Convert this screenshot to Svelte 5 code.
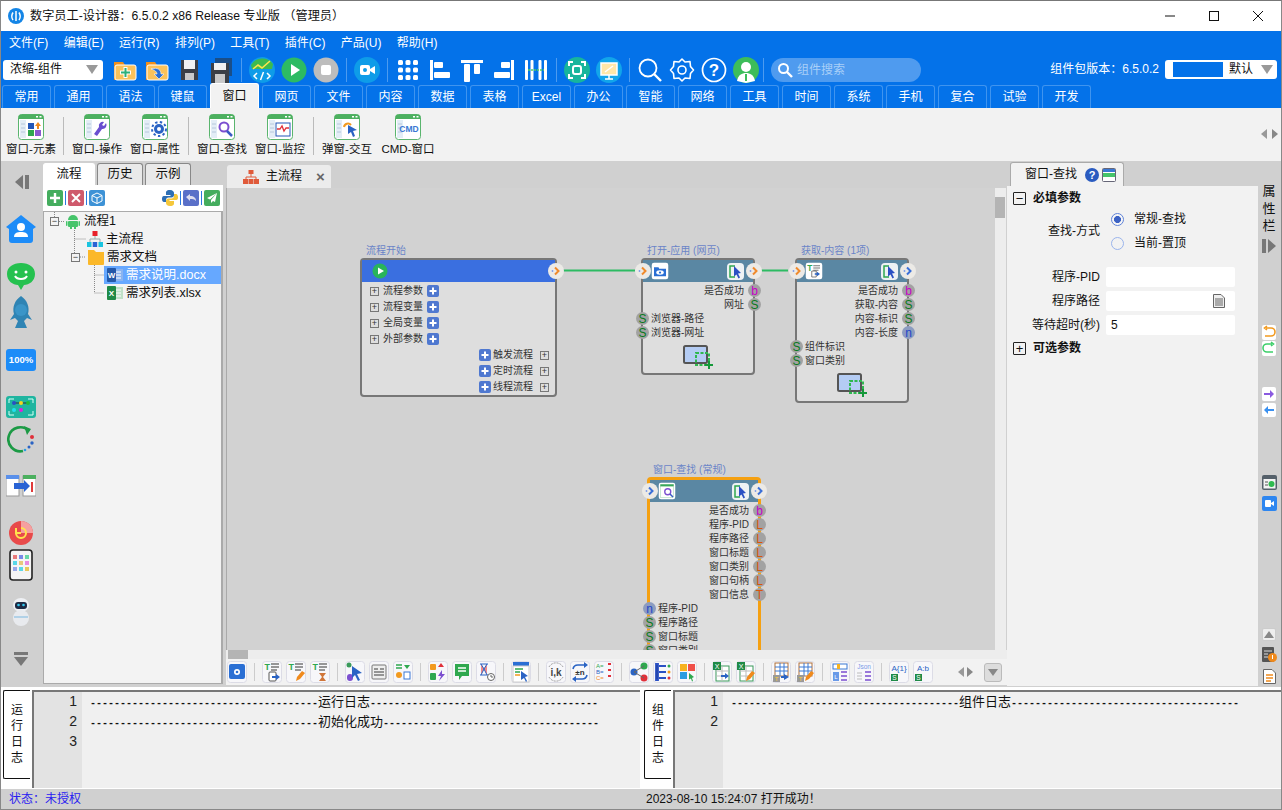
<script>
  const menus = ['文件(F)', '编辑(E)', '运行(R)', '排列(P)', '工具(T)', '插件(C)', '产品(U)', '帮助(H)']
  const tabs = ['常用', '通用', '语法', '键鼠', '窗口', '网页', '文件', '内容', '数据', '表格', 'Excel', '办公', '智能', '网络', '工具', '时间', '系统', '手机', '复合', '试验', '开发']

  const winBody = {
    elem: '<rect x="10" y="9" width="6" height="6" fill="#2357b8"/><path d="M20 8l3 4h-2v3h-2v-3h-2z" fill="#f08a1c"/><rect x="10" y="16" width="6" height="6" fill="#2fa84f"/><rect x="17" y="16" width="6" height="6" fill="#8a5ad0"/>',
    wrench: '<path d="M22 9a4 4 0 0 1-4 6l-5 7-3-2 5-7a4 4 0 0 1 5-5l-2 3 2 1z" fill="#6a4fd0"/>',
    gear: '<circle cx="17" cy="15" r="5" fill="#2a63c4"/><circle cx="17" cy="15" r="7" fill="none" stroke="#2a63c4" stroke-width="2" stroke-dasharray="2.4 2.4"/><circle cx="17" cy="15" r="2" fill="#fff"/>',
    search: '<circle cx="15" cy="13" r="4.5" fill="#fff" stroke="#7c4fd0" stroke-width="2"/><path d="M18 17l5 5" stroke="#3a5bc4" stroke-width="2.5"/>',
    monitor: '<rect x="9" y="9" width="14" height="13" fill="#fff" stroke="#2357b8"/><path d="M10 15h3l2-3 2 5 2-3h3" fill="none" stroke="#e0303a" stroke-width="1.3"/>',
    pop: '<path d="M10 13a4 4 0 0 1 7-2" fill="none" stroke="#f29a1f" stroke-width="2"/><path d="M14 11l9 5-4 1 2 5-2 1-2-5-3 2z" fill="#2a63c4"/>',
    cmd: '<text x="14" y="18" font-size="8.500" font-weight="700" text-anchor="middle" fill="#3a78d4" font-family="Liberation Sans">CMD</text>'
  }
  const ribbon = [
    { key: 'elem', label: '窗口-元素' }, 'sep',
    { key: 'wrench', label: '窗口-操作' }, { key: 'gear', label: '窗口-属性' }, 'sep',
    { key: 'search', label: '窗口-查找' }, { key: 'monitor', label: '窗口-监控' }, 'sep',
    { key: 'pop', label: '弹窗-交互' }, { key: 'cmd', label: 'CMD-窗口' }
  ]

  const box = '<rect x=".5" y=".5" width="19" height="21" rx="3" fill="#f7f7fa" stroke="#dcdce6"/>'
  const tList = '<text x="2.500" y="9" font-size="9" font-weight="700" fill="#2fa84f" font-family="Liberation Sans">T</text><path d="M9 3h8M9 6h8M9 9h6" stroke="#777" stroke-width="1.300"/>'
  const pen = '<path d="M10 20l1-4 5-6 3 2-5 6z" fill="#f08a1c"/>'
  const arrowDoc = '<rect x="7" y="11" width="7" height="9" rx="1" fill="#fff" stroke="#555"/><path d="M10 15h4v-2l4 3-4 3v-2h-4z" fill="#2a63c4"/>'
  const xl = '<rect x="1" y="1" width="8" height="8" fill="#1f8a46"/><text x="5" y="7.500" font-size="7" fill="#fff" text-anchor="middle" font-family="Liberation Sans">X</text>'
  const grid = '<rect x="4" y="2" width="13" height="13" fill="#fff" stroke="#b0703a"/><path d="M4 6h13M4 10h13M9 2v13M13 2v13" stroke="#3a78d4"/><rect x="2" y="14" width="7" height="7" fill="#999"/><text x="5.500" y="20" font-size="6" fill="#fc3" text-anchor="middle" font-family="Liberation Sans">T</text>'
  const excelDoc = '<rect x="4" y="5" width="13" height="15" fill="#fff" stroke="#3a9a5a"/><path d="M4 10h13M4 15h13M10 5v15" stroke="#bbb"/>' + xl
  const bottomIcons = [
    ['<rect x="2" y="3" width="16" height="15" rx="2" fill="#2a6fd4"/><circle cx="10" cy="11" r="3" fill="#fff"/><circle cx="10" cy="11" r="1.300" fill="#2a6fd4"/>'],
    [tList + arrowDoc, tList + pen, tList + '<path d="M9 12h7l-3 4 3 4h-7l3-4z" fill="#d0763a"/>'],
    ['<circle cx="4" cy="4" r="2.500" fill="#3a9a5a"/><rect x="2" y="13" width="6" height="7" rx="3" fill="#7c4fd0"/><path d="M7 5l10 7-5 1 3 6-2 1-3-6-3 3z" fill="#2a63c4"/>',
      '<rect x="3" y="4" width="14" height="14" rx="1" fill="#eee" stroke="#777"/><path d="M5 8h4M11 8h4M5 11h10M5 14h10" stroke="#777" stroke-width="1.500"/>',
      '<path d="M3 4h6M3 7h6" stroke="#2fa84f" stroke-width="1.500"/><path d="M11 4h6l-3 4z" fill="#2fa84f"/><circle cx="6" cy="14" r="3" fill="#f29a1f"/><rect x="11" y="11" width="6" height="7" fill="#fff" stroke="#3a78d4"/>'],
    ['<rect x="2" y="3" width="6" height="6" rx="1" fill="#f29a1f"/><path d="M13 2l3 4h-6z" fill="#e0303a"/><rect x="2" y="12" width="6" height="7" rx="1" fill="#2fa84f"/><path d="M14 9l-4 6h3l-2 5 6-7h-3z" fill="#7c4fd0"/>',
      '<path d="M3 3h14v12h-7l-3 4v-4h-4z" fill="#2fa84f"/><path d="M6 7h8M6 10h8" stroke="#fff" stroke-width="1.300"/>',
      '<path d="M4 3h8M4 14h8M5 3l3 5-3 6M11 3l-3 5 3 6" fill="#e88" stroke="#2a63c4"/><circle cx="15" cy="16" r="3.500" fill="#fff" stroke="#666"/><path d="M15 14v2h2" fill="none" stroke="#666"/>'],
    ['<rect x="2" y="1" width="16" height="4" fill="#2a6fd4"/><rect x="2" y="5" width="16" height="16" fill="#fff" stroke="#ccc"/><path d="M4 8h8M4 11h5" stroke="#2fa84f" stroke-width="1.500"/><path d="M4 14h5" stroke="#f29a1f" stroke-width="1.500"/><path d="M10 10l7 5-3 1 2 4-1 1-2-4-3 2z" fill="#2a63c4"/>'],
    ['<path d="M3 6a8 8 0 0 1 14 0M3 16a8 8 0 0 0 14 0" fill="none" stroke="#999" stroke-dasharray="2 1"/><text x="10" y="15" font-size="10" font-weight="700" fill="#444" text-anchor="middle" font-family="Liberation Sans">i,k</text>',
      '<path d="M3 8a5 5 0 0 1 5-4h7M17 14a5 5 0 0 1-5 4H5" fill="none" stroke="#2a63c4" stroke-width="1.600"/><path d="M14 1l4 3-4 3zM6 15l-4 3 4 3z" fill="#2a63c4"/><text x="10" y="14" font-size="8" font-weight="700" fill="#333" text-anchor="middle" font-family="Liberation Sans">±n</text>',
      '<text x="2" y="7" font-size="6" fill="#2fa84f" font-family="Liberation Sans">A=</text><text x="2" y="13" font-size="6" fill="#2a63c4" font-family="Liberation Sans">B=</text><text x="2" y="19" font-size="6" fill="#f08a1c" font-family="Liberation Sans">C=</text><path d="M14 3h3M14 9h3M14 15h3" stroke="#e0303a" stroke-width="2"/>'],
    ['<circle cx="5" cy="11" r="3.500" fill="#2a63c4"/><circle cx="15" cy="5" r="3.500" fill="#2fa84f"/><circle cx="15" cy="17" r="3.500" fill="#e0303a"/><path d="M5 11L15 5M5 11l10 6" stroke="#666"/>',
      '<path d="M3 3h2v16H3zM6 5h7M6 11h7M6 17h7" stroke="#2a50c4" stroke-width="1.800"/><circle cx="16" cy="5" r="1.500" fill="#2fa84f"/><circle cx="16" cy="11" r="1.500" fill="#f29a1f"/><circle cx="16" cy="17" r="1.500" fill="#e0303a"/>',
      '<rect x="3" y="3" width="7" height="7" fill="#f7b21f"/><rect x="11" y="3" width="7" height="7" fill="#f0504a"/><rect x="3" y="11" width="7" height="7" fill="#2a9de0"/><path d="M12 12l5 4-2 1 1 3-1 .5-1-3-2 1z" fill="#2fa84f"/>'],
    [excelDoc + '<path d="M9 14h4v-2l4 3-4 3v-2h-4z" fill="#2a63c4"/>', excelDoc + pen],
    [grid + '<path d="M10 15h3v-2l5 3-5 3v-2h-3z" fill="#2a63c4"/>', grid + pen],
    ['<rect x="3" y="3" width="14" height="5" fill="#fff" stroke="#3a78d4"/><rect x="7" y="3" width="3" height="5" fill="#f7b21f"/><rect x="3" y="11" width="6" height="9" fill="#6a9ae8"/><text x="6" y="18" font-size="6" fill="#fff" text-anchor="middle" font-family="Liberation Sans">L</text><path d="M11 11h6M11 15h6M11 19h6" stroke="#7c4fd0" stroke-width="1.400"/>',
      '<text x="10" y="8" font-size="6.500" fill="#7c9ae8" text-anchor="middle" font-family="Liberation Sans">Json</text><path d="M3 12h5M3 15h5M3 18h5" stroke="#bbb"/><path d="M11 11h6M11 15h6M11 19h6" stroke="#7c4fd0" stroke-width="1.400"/>'],
    ['<text x="10" y="10" font-size="8" fill="#2a63c4" text-anchor="middle" font-family="Liberation Sans">A{1}</text><rect x="2" y="13" width="7" height="7" fill="#1f8a46"/><text x="5.500" y="19" font-size="6.500" fill="#fff" text-anchor="middle" font-family="Liberation Sans">S</text>',
      '<text x="10" y="10" font-size="8" fill="#2a63c4" text-anchor="middle" font-family="Liberation Sans">A:b</text><rect x="2" y="13" width="7" height="7" fill="#1f8a46"/><text x="5.500" y="19" font-size="6.500" fill="#fff" text-anchor="middle" font-family="Liberation Sans">S</text>']
  ]

  const dashes = (n) => '-'.repeat(n)

  const windowGlyph = '<rect x="1" y="1" width="22" height="22" rx="3" fill="#fff"/><rect x="3" y="3" width="18" height="3" fill="#3aa85a"/><rect x="3" y="6" width="18" height="15" fill="#fff" stroke="#8ccf9e" stroke-width=".6"/>'
  const nodes = [
    {
      id: 'open', title: '打开-应用 (网页)', x: 414, y: 55, w: 114, h: 117,
      glyph: '<rect x="1" y="1" width="22" height="22" rx="3" fill="#fff"/><path d="M4 7h6l1 2h9v10H4z" fill="#2a6fd4"/><ellipse cx="12" cy="14" rx="5" ry="3" fill="#fff"/><circle cx="12" cy="14" r="1.500" fill="#2a6fd4"/>',
      inTone: 'orange', outTone: 'orange',
      outs: [['是否成功', 'b'], ['网址', 'S']], ins: [['浏览器-路径', 'S'], ['浏览器-网址', 'S']]
    },
    {
      id: 'get', title: '获取-内容 (1项)', x: 568, y: 55, w: 114, h: 145,
      glyph: '<rect x="1" y="1" width="22" height="22" rx="3" fill="#fff"/><text x="3" y="12" font-size="11" font-weight="700" fill="#2fa84f" font-family="Liberation Sans">T</text><path d="M11 5h9M11 8h9M11 11h7" stroke="#777" stroke-width="1.400"/><path d="M9 12h6v8H9z" fill="#fff" stroke="#555"/><path d="M13 15h3v-2l4 3-4 3v-2h-3z" fill="#2a63c4"/>',
      inTone: 'orange', outTone: 'blue',
      outs: [['是否成功', 'b'], ['获取-内容', 'S'], ['内容-标识', 'S'], ['内容-长度', 'n']], ins: [['组件标识', 'S'], ['窗口类别', 'S']]
    },
    {
      id: 'find', title: '窗口-查找 (常规)', x: 420, y: 274, w: 114, h: 300, active: true,
      glyph: windowGlyph + '<circle cx="13" cy="13" r="4" fill="#fff" stroke="#7c4fd0" stroke-width="1.800"/><path d="M16 16l4 4" stroke="#3a5bc4" stroke-width="2"/>',
      inTone: 'blue', outTone: 'blue',
      outs: [['是否成功', 'b'], ['程序-PID', 'L'], ['程序路径', 'L'], ['窗口标题', 'L'], ['窗口类别', 'L'], ['窗口句柄', 'L'], ['窗口信息', 'T']],
      ins: [['程序-PID', 'n'], ['程序路径', 'S'], ['窗口标题', 'S'], ['窗口类别', 'S']]
    }
  ]
</script>

{#snippet execPort(side, tone)}
  <span class="exec {side}">
    <svg width="12" height="12" viewBox="0 0 12 12">
      <path d="M5 2.500L8.500 6 5 9.500" fill="none" stroke={tone === 'orange' ? '#f08a2c' : '#3a6fd8'} stroke-width="2" />
      <circle cx="2.500" cy="6" r=".9" fill="#7c9ae8" />
    </svg>
  </span>
{/snippet}

{#snippet plusBtn()}
  <svg class="plus" width="12" height="12" viewBox="0 0 12 12">
    <rect width="12" height="12" rx="2" fill="#4f78d0" />
    <path d="M6 2.500v7M2.500 6h7" stroke="#fff" stroke-width="2" />
  </svg>
{/snippet}

{#snippet expander(open)}
  <span class="expander">{open ? '−' : '+'}</span>
{/snippet}

{#snippet addShot()}
  <svg class="shot" width="30" height="24" viewBox="0 0 30 24">
    <rect x="1" y="1" width="23" height="17" rx="1.500" fill="#b4ccf4" stroke="#555" stroke-width="2" />
    <rect x="13" y="8" width="13" height="12" fill="none" stroke="#2fb84f" stroke-width="2" stroke-dasharray="3 1.500" />
    <path d="M26 16v8M22 20h8" stroke="#15993a" stroke-width="2" />
  </svg>
{/snippet}

{#snippet cursorChip()}
  <svg width="17" height="17" viewBox="0 0 17 17">
    <rect width="17" height="17" rx="4" fill="#eef2f4" />
    <path d="M8 3H3v11h5" fill="none" stroke="#2fa84f" stroke-width="1.500" />
    <path d="M7 3l7 7-3 .5 2 4-1.500 1-2-4-2.500 2z" fill="#2a50c4" />
  </svg>
{/snippet}

{#snippet port(kind)}
  <span class="port" class:b={kind === 'b'} class:s={kind === 'S'} class:n={kind === 'n'} class:l={kind === 'L' || kind === 'T'}>{kind}</span>
{/snippet}

<div class="window">
  <header class="titlebar">
    <svg width="16" height="16" viewBox="0 0 16 16">
      <circle cx="8" cy="8" r="8" fill="#1485e6" />
      <path d="M8 3v10M5 4.500C3.500 7 3.500 10 5 12M11 4.500c1.500 2.500 1.500 5.500 0 7.500" fill="none" stroke="#fff" stroke-width="1.500" />
    </svg>
    <span class="title">数字员工-设计器：6.5.0.2 x86 Release 专业版 （管理员）</span>
    <div class="controls">
      <svg width="10" height="10" viewBox="0 0 10 10"><path d="M0 5h10" stroke="#111" /></svg>
      <svg width="10" height="10" viewBox="0 0 10 10"><rect x=".5" y=".5" width="9" height="9" fill="none" stroke="#111" /></svg>
      <svg width="10" height="10" viewBox="0 0 10 10"><path d="M0 0l10 10M10 0L0 10" stroke="#111" /></svg>
    </div>
  </header>

  <nav class="menubar">
    {#each menus as m}<span>{m}</span>{/each}
  </nav>

  <div class="toolbar">
    <div class="select">浓缩-组件<i class="caret"></i></div>

    <div class="group first">
      <svg class="ti" viewBox="0 0 26 26"><path d="M2 5h9l2 3h10v15H2z" fill="#f08f1a" /><rect x="3" y="8" width="21" height="15" rx="2" fill="#fbc25a" stroke="#fff" /><path d="M13.500 10v11M8 15.500h11" stroke="#fff" stroke-width="4" /><path d="M13.500 11v9M9 15.500h9" stroke="#2fb07a" stroke-width="2" /></svg>
      <svg class="ti" viewBox="0 0 26 26"><path d="M2 5h9l2 3h10v15H2z" fill="#f08f1a" /><rect x="3" y="8" width="21" height="15" rx="2" fill="#fbc25a" stroke="#fff" /><path d="M7 12c7-2 10 1 10 5h3l-5 5-5-5h3c0-2-2-4-6-5z" fill="#2a6fd4" stroke="#fff" stroke-width=".6" /></svg>
      <svg class="ti" viewBox="0 0 26 26"><path d="M5 3h17v20H5z" fill="#3b3f46" /><rect x="8" y="3" width="11" height="9" fill="#f1f1f1" /><rect x="9" y="16" width="9" height="7" fill="#c9c9c9" /></svg>
      <svg class="ti" viewBox="0 0 26 26"><rect x="7" y="1" width="17" height="18" fill="#1a4e88" /><path d="M3 6h18v20H3z" fill="#3b3f46" /><rect x="6" y="6" width="12" height="7" fill="#f1f1f1" /><rect x="7" y="17" width="10" height="9" fill="#c9c9c9" /></svg>
    </div>
    <i class="sep"></i>
    <div class="group">
      <svg class="ti" viewBox="0 0 26 26"><circle cx="13" cy="13" r="13" fill="#0e9ce8" /><path d="M2 8a13 13 0 0 1 22-1l-1 5H3z" fill="#3dba4e" /><path d="M4 12l5-4 4 3 8-7" fill="none" stroke="#ffe34d" stroke-width="1.600" /><path d="M8 16l-3 3 3 3M18 16l3 3-3 3M14.500 15l-3 8" fill="none" stroke="#fff" stroke-width="1.500" /></svg>
      <svg class="ti" viewBox="0 0 26 26"><circle cx="13" cy="13" r="12.500" fill="#2dbb63" /><path d="M10 7l9 6-9 6z" fill="#fff" /></svg>
      <svg class="ti" viewBox="0 0 26 26"><circle cx="13" cy="13" r="12.500" fill="#bdbdbd" /><rect x="8" y="8" width="10" height="10" rx="2" fill="#fff" /></svg>
    </div>
    <i class="sep"></i>
    <div class="group">
      <svg class="ti" viewBox="0 0 26 26"><circle cx="13" cy="13" r="13" fill="#0e9ce8" /><rect x="6" y="8" width="10" height="10" rx="2" fill="#fff" /><path d="M16 12l5-3v8l-5-3z" fill="#fff" /><circle cx="11" cy="13" r="2" fill="#0e9ce8" /></svg>
    </div>
    <i class="sep"></i>
    <div class="group">
      <svg class="ti" viewBox="0 0 26 26" fill="#fff"><rect x="3" y="3" width="5" height="5" rx="1.500" /><rect x="10.500" y="3" width="5" height="5" rx="1.500" /><rect x="18" y="3" width="5" height="5" rx="1.500" /><rect x="3" y="10.500" width="5" height="5" rx="1.500" /><rect x="10.500" y="10.500" width="5" height="5" rx="1.500" /><rect x="18" y="10.500" width="5" height="5" rx="1.500" /><rect x="3" y="18" width="5" height="5" rx="1.500" /><rect x="10.500" y="18" width="5" height="5" rx="1.500" /><rect x="18" y="18" width="5" height="5" rx="1.500" /></svg>
      <svg class="ti" viewBox="0 0 26 26" fill="#fff"><rect x="3" y="3" width="3" height="20" /><rect x="7" y="5" width="9" height="6" rx="1" /><rect x="7" y="15" width="16" height="6" rx="1" /></svg>
      <svg class="ti" viewBox="0 0 26 26" fill="#fff"><rect x="2" y="3" width="22" height="3" /><rect x="5" y="7" width="6" height="18" rx="1" /><rect x="15" y="7" width="6" height="10" rx="1" /></svg>
      <svg class="ti" viewBox="0 0 26 26" fill="#fff"><rect x="20" y="3" width="3" height="20" /><rect x="10" y="5" width="9" height="6" rx="1" /><rect x="3" y="15" width="16" height="6" rx="1" /></svg>
      <svg class="ti" viewBox="0 0 26 26" fill="#fff"><rect x="2" y="3" width="3" height="20" rx="1" /><rect x="7.500" y="3" width="3" height="20" rx="1" /><rect x="15.500" y="3" width="3" height="20" rx="1" /><rect x="21" y="3" width="3" height="20" rx="1" /><path d="M5 13h16" stroke="#4fd060" stroke-width="1.500" stroke-dasharray="2 1" /></svg>
    </div>
    <i class="sep"></i>
    <div class="group">
      <svg class="ti" viewBox="0 0 26 26"><circle cx="13" cy="13" r="13" fill="#17b59c" /><rect x="9" y="9" width="8" height="8" rx="2" fill="none" stroke="#fff" stroke-width="2" /><path d="M5 9V5h4M21 9V5h-4M5 17v4h4M21 17v4h-4" fill="none" stroke="#fff" stroke-width="2" /></svg>
      <svg class="ti" viewBox="0 0 26 26"><circle cx="13" cy="13" r="13" fill="#12a5ea" /><rect x="5" y="6" width="16" height="12" fill="#ffe7a8" stroke="#fff" stroke-width="1.500" /><path d="M9 22h8M13 18v4M9 15l8-6" stroke="#fff" stroke-width="1.500" /></svg>
    </div>
    <i class="sep"></i>
    <div class="group">
      <svg class="ti" viewBox="0 0 26 26"><circle cx="11" cy="11" r="8.500" fill="none" stroke="#fff" stroke-width="1.800" /><path d="M17 17l7 7" stroke="#fff" stroke-width="2.400" /></svg>
      <svg class="ti" viewBox="0 0 26 26"><path d="M13 2l3 3 5-.5.500 5 3 3.500-3 3.500-.5 5-5-.5-3 3-3-3-5 .5-.5-5-3-3.500 3-3.500.5-5 5 .5z" fill="none" stroke="#fff" stroke-width="1.600" stroke-linejoin="round" /><circle cx="13" cy="13" r="4" fill="none" stroke="#fff" stroke-width="1.600" /></svg>
      <svg class="ti" viewBox="0 0 26 26"><circle cx="13" cy="13" r="11.500" fill="none" stroke="#fff" stroke-width="1.700" /><text x="13" y="19" font-size="17" font-weight="700" fill="#fff" text-anchor="middle" font-family="Liberation Sans">?</text></svg>
      <svg class="ti" viewBox="0 0 26 26"><circle cx="13" cy="13" r="13" fill="#3dbd5a" /><circle cx="13" cy="10" r="5" fill="#fff" /><path d="M4 24c1-6 5-8 9-8s8 2 9 8l-9 2z" fill="#fff" /><path d="M13 17v7" stroke="#3dbd5a" stroke-width="2" /></svg>
    </div>
    <i class="sep last"></i>
    <div class="searchbox">
      <svg width="16" height="16" viewBox="0 0 16 16"><circle cx="6.500" cy="6.500" r="4.500" fill="none" stroke="#fff" stroke-width="2" /><path d="M10 10l5 5" stroke="#fff" stroke-width="2.400" /></svg>
      <span>组件搜索</span>
    </div>
    <span class="pkg">组件包版本：6.5.0.2</span>
    <div class="theme"><i class="swatch"></i><span>默认</span><i class="caret"></i></div>
  </div>

  <div class="tabbar">
    {#each tabs as t}<span class="tab" class:active={t === '窗口'}>{t}</span>{/each}
  </div>

  <div class="ribbon">
    {#each ribbon as r}
      {#if r === 'sep'}
        <i class="rsep"></i>
      {:else}
        <div class="ritem" class:cmd={r.key === 'cmd'}>
          <svg width="26" height="26" viewBox="0 0 26 26">
            <rect x=".5" y=".5" width="25" height="25" rx="3" fill="#fff" stroke="#5ab56e" />
            <path d="M.5 5V3.500a3 3 0 0 1 3-3h19a3 3 0 0 1 3 3V5z" fill="#4cb05f" />
            <rect x="18" y="2" width="2" height="1.500" fill="#fff" /><rect x="21.500" y="2" width="2" height="1.500" fill="#fff" />
            <rect x="2" y="6" width="6" height="18" fill="#e3edf6" />
            <path d="M3 10h4M3 14h4M3 18h4" stroke="#b6c8dc" />
            {@html winBody[r.key]}
          </svg>
          <span>{r.label}</span>
        </div>
      {/if}
    {/each}
    <div class="rscroll"><i class="tri left"></i><i class="tri right"></i></div>
  </div>

  <main class="workspace">
    <aside class="dock">
      <svg class="dock-toggle" width="16" height="14" viewBox="0 0 16 14"><path d="M9 0v14L1 7z" fill="#777" /><rect x="11" width="4" height="14" fill="#777" /></svg>
      <svg class="d-home" width="30" height="28" viewBox="0 0 30 28"><path d="M15 0L0 12l3 2v11a3 3 0 0 0 3 3h18a3 3 0 0 0 3-3V14l3-2z" fill="#1d8cf8" /><circle cx="15" cy="12" r="4" fill="#fff" /><path d="M8 22c0-4 3-5 7-5s7 1 7 5z" fill="#fff" /></svg>
      <svg class="d-smile" width="28" height="28" viewBox="0 0 28 28"><path d="M14 0c8 0 14 4 14 11s-6 11-11 11l-3 5-3-5C6 22 0 18 0 11S6 0 14 0z" fill="#25c14f" /><circle cx="9" cy="9" r="1.500" fill="#fff" /><circle cx="19" cy="9" r="1.500" fill="#fff" /><path d="M8 13c2 4 10 4 12 0" fill="none" stroke="#fff" stroke-width="2" /></svg>
      <svg class="d-fish" width="22" height="32" viewBox="0 0 22 32"><path d="M11 0c6 4 9 11 7 18l4 6-5-2-3 3 3 7H5l3-7-3-3-5 2 4-6C2 11 5 4 11 0z" fill="#2f84b4" /><circle cx="11" cy="14" r="6" fill="#3a95c8" /></svg>
      <div class="d-pct">100%</div>
      <svg class="d-teal" width="30" height="22" viewBox="0 0 30 22"><rect width="30" height="22" rx="3" fill="#1fb5a0" /><path d="M3 7V3h5M27 7V3h-5M3 15v4h5M27 15v4h-5" fill="none" stroke="#d8fff6" /><path d="M7 7h14" stroke="#333" /><circle cx="8" cy="7" r="2" fill="#2a50c4" /><circle cx="15" cy="7" r="2" fill="#f5d71f" /><circle cx="22" cy="7" r="2" fill="#1fbd3a" /><circle cx="8" cy="14" r="2" fill="#1fe0f0" /><circle cx="15" cy="14" r="2" fill="#e01fe0" /></svg>
      <svg class="d-cycle" width="28" height="28" viewBox="0 0 28 28"><path d="M22 6A12 12 0 1 0 16 26" fill="none" stroke="#1c9a45" stroke-width="2.600" /><path d="M17 1l7 3-4 6z" fill="#1c9a45" /><circle cx="25" cy="12" r="2" fill="#e0303a" /><circle cx="25" cy="18" r="1.700" fill="#2a63c4" /><circle cx="22" cy="22" r="1.500" fill="#2a63c4" /><circle cx="18" cy="25" r="1.300" fill="#2a9de0" /></svg>
      <svg class="d-move" width="30" height="22" viewBox="0 0 30 22"><rect y="1" width="13" height="20" fill="#fff" stroke="#999" /><rect x="17" y="1" width="13" height="20" fill="#fff" stroke="#999" /><rect width="13" height="4" fill="#5a90ea" /><rect x="17" width="13" height="4" fill="#4cb05f" /><path d="M8 8h10V5l6 6-6 6v-3H8z" fill="#2a63d4" /><rect x="25" y="7" width="2" height="10" fill="#e03a3a" /></svg>
      <svg class="d-radar" width="24" height="24" viewBox="0 0 24 24"><circle cx="12" cy="12" r="12" fill="#e84a4a" /><path d="M12 12V0a12 12 0 0 1 12 12z" fill="#f5a0a0" /><path d="M7 12a5 5 0 1 0 5-5" fill="none" stroke="#ffe34d" stroke-width="2" /><path d="M7 7v5h5" fill="none" stroke="#ffe34d" stroke-width="2" /></svg>
      <svg class="d-phone" width="24" height="32" viewBox="0 0 24 32"><rect x="1" y="1" width="22" height="30" rx="3" fill="#f5f5f5" stroke="#222" stroke-width="1.600" /><rect x="4" y="6" width="4" height="4" fill="#e87a7a" /><rect x="10" y="6" width="4" height="4" fill="#7a8ae8" /><rect x="16" y="6" width="4" height="4" fill="#6ad8a8" /><rect x="4" y="12" width="4" height="4" fill="#5ad8e8" /><rect x="10" y="12" width="4" height="4" fill="#e8c87a" /><rect x="16" y="12" width="4" height="4" fill="#e88ae0" /><rect x="4" y="18" width="4" height="4" fill="#9aa8e8" /><rect x="10" y="18" width="4" height="4" fill="#5ad8e8" /><rect x="16" y="18" width="4" height="4" fill="#e8c85a" /></svg>
      <svg class="d-robot" width="20" height="30" viewBox="0 0 20 30"><ellipse cx="10" cy="8" rx="8" ry="7" fill="#eef0f4" /><rect x="4" y="5" width="12" height="7" rx="3" fill="#1d2a44" /><circle cx="7.500" cy="8" r="1.300" fill="#35c8f0" /><circle cx="12.500" cy="8" r="1.300" fill="#35c8f0" /><ellipse cx="10" cy="21" rx="8" ry="8" fill="#e8eaee" /><path d="M3 20h14" stroke="#7ab8e0" /></svg>
      <svg class="d-down" width="16" height="15" viewBox="0 0 16 15"><rect x="1" width="14" height="3" fill="#777" /><path d="M1 5h14l-7 9z" fill="#777" /></svg>
    </aside>

    <section class="flowpanel">
      <div class="ptabs">
        <span class="ptab active">流程</span><span class="ptab">历史</span><span class="ptab">示例</span>
      </div>
      <div class="ptools">
        <svg width="16" height="16" viewBox="0 0 16 16"><rect width="16" height="16" rx="2" fill="#44ad5e" /><path d="M8 3v10M3 8h10" stroke="#fff" stroke-width="2.400" /></svg>
        <i class="psep"></i>
        <svg width="16" height="16" viewBox="0 0 16 16"><rect width="16" height="16" rx="2" fill="#cf5a6c" /><path d="M4 4l8 8M12 4l-8 8" stroke="#fff" stroke-width="2" /></svg>
        <i class="psep"></i>
        <svg width="16" height="16" viewBox="0 0 16 16"><rect width="16" height="16" rx="2" fill="#3d92d6" /><path d="M8 3l5 2.500v5.500L8 13.500 3 11V5.500zM3 5.500L8 8l5-2.500M8 8v5.500" fill="none" stroke="#fff" /></svg>
        <svg class="py" width="16" height="16" viewBox="0 0 16 16"><path d="M8 0C4 0 4 2 4 3v2h4.500v1H2C0 6 0 8 0 9s.5 3 2 3h2v-2c0-1.500 1-2.500 2.500-2.500h3C11 7.500 12 6.500 12 5V3c0-1-1-3-4-3z" fill="#2f6fb4" /><path d="M8 16c4 0 4-2 4-3v-2H7.500v-1H14c2 0 2-2 2-3s-.5-3-2-3h-2v2c0 1.500-1 2.500-2.500 2.500h-3C5 8.500 4 9.500 4 11v2c0 1 1 3 4 3z" fill="#f5c73a" /></svg>
        <i class="psep"></i>
        <svg width="16" height="16" viewBox="0 0 16 16"><rect width="16" height="16" rx="2" fill="#5a70c8" /><path d="M3 7l4-3v2c4 0 6 2 6 5-2-2-3-2-6-2v2z" fill="#dde" /></svg>
        <i class="psep"></i>
        <svg width="16" height="16" viewBox="0 0 16 16"><rect width="16" height="16" rx="2" fill="#44ad5e" /><path d="M13 3L3 8l3 1.500L13 3 7 10v3l2-2 2 1z" fill="#fff" /></svg>
      </div>
      <div class="tree">
        <svg class="treelines" width="70" height="90">
          <path d="M10.500 0v5M15 9.500h6M30.500 16v26M30.500 27h12M36 45h6M50.500 53v28M50.500 63h10M50.500 81h10" fill="none" stroke="#888" stroke-dasharray="1 1" />
        </svg>
        <div class="trow lv0">
          {@render expander(true)}
          <svg width="16" height="16" viewBox="0 0 16 16"><path d="M3 7a5 5 0 0 1 10 0z" fill="#45c46a" /><rect x="3" y="8" width="10" height="6" rx="1" fill="#45c46a" /><rect x="1" y="8" width="1.500" height="5" rx=".7" fill="#45c46a" /><rect x="13.500" y="8" width="1.500" height="5" rx=".7" fill="#45c46a" /><rect x="5" y="14" width="2" height="2" fill="#45c46a" /><rect x="9" y="14" width="2" height="2" fill="#45c46a" /></svg>
          <span>流程1</span>
        </div>
        <div class="trow lv1">
          <svg width="16" height="16" viewBox="0 0 16 16"><rect x="5.500" width="5" height="5" fill="#e8202a" /><path d="M8 5v3M3 11V8h10v3" fill="none" stroke="#9aa" /><rect y="11" width="4.500" height="5" fill="#19c4e0" /><rect x="5.700" y="11" width="4.500" height="5" fill="#2a63d4" /><rect x="11.500" y="11" width="4.500" height="5" fill="#19c4e0" /></svg>
          <span>主流程</span>
        </div>
        <div class="trow lv1b">
          {@render expander(true)}
          <svg width="16" height="16" viewBox="0 0 16 16"><path d="M0 1h6l2 2h8v12a1 1 0 0 1-1 1H1a1 1 0 0 1-1-1z" fill="#fbb829" /></svg>
          <span>需求文档</span>
        </div>
        <div class="trow lv2 selected">
          <svg width="16" height="16" viewBox="0 0 16 16"><rect x="6" y="2" width="10" height="12" fill="#8ab4f0" /><path d="M9 5h5M9 8h5M9 11h5" stroke="#fff" /><rect y="1" width="9" height="14" rx="1" fill="#2458a8" /><text x="4.500" y="11" font-size="8" font-weight="700" fill="#fff" text-anchor="middle" font-family="Liberation Sans">W</text></svg>
          <span>需求说明.docx</span>
        </div>
        <div class="trow lv2">
          <svg width="16" height="16" viewBox="0 0 16 16"><rect x="6" y="2" width="10" height="12" fill="#bfe0c8" /><path d="M9 5h5M9 8h5M9 11h5" stroke="#fff" /><rect y="1" width="9" height="14" rx="1" fill="#1f8a46" /><text x="4.500" y="11" font-size="8" font-weight="700" fill="#fff" text-anchor="middle" font-family="Liberation Sans">X</text></svg>
          <span>需求列表.xlsx</span>
        </div>
      </div>
    </section>

    <section class="center">
      <div class="doctabs">
        <div class="doctab">
          <svg width="16" height="14" viewBox="0 0 16 14"><rect x="5.500" width="5" height="4" fill="#e05a3a" /><path d="M8 4v3M3 9V7h10v2" fill="none" stroke="#e05a3a" /><rect y="9" width="5" height="5" fill="#e05a3a" /><rect x="5.500" y="9" width="5" height="5" fill="#e05a3a" /><rect x="11" y="9" width="5" height="5" fill="#e05a3a" /></svg>
          <span>主流程</span><b>×</b>
        </div>
      </div>
      <div class="viewport">
        <div class="canvas">
          <svg class="wires" width="768" height="462">
            <path d="M336 82.500h72M533 82.500h28" stroke="#2dbb63" stroke-width="2" />
          </svg>

          <div class="start-node">
            <div class="ntitle">流程开始</div>
            <div class="nbox">
              <div class="nhead blue">
                <svg width="16" height="16" viewBox="0 0 16 16"><circle cx="8" cy="8" r="7.500" fill="#29b45b" /><path d="M6 4.500l6 3.500-6 3.500z" fill="#fff" /></svg>
                {@render execPort('right', 'orange')}
              </div>
              <div class="srows">
                {#each ['流程参数', '流程变量', '全局变量', '外部参数'] as r}
                  <div class="srow">{@render expander(false)}<span>{r}</span>{@render plusBtn()}</div>
                {/each}
                {#each ['触发流程', '定时流程', '线程流程'] as r}
                  <div class="srow end">{@render plusBtn()}<span>{r}</span>{@render expander(false)}</div>
                {/each}
              </div>
            </div>
          </div>

          {#each nodes as n}
            <div class="node" style="left:{n.x}px;top:{n.y}px;width:{n.w}px">
              <div class="ntitle">{n.title}</div>
              <div class="nbox" class:active={n.active} style="height:{n.h}px">
                <div class="nhead steel">
                  {@render execPort('left', n.inTone)}
                  <svg class="nglyph" width="24" height="24" viewBox="0 0 24 24">{@html n.glyph}</svg>
                  <span class="chip">{@render cursorChip()}</span>
                  {@render execPort('right', n.outTone)}
                </div>
                <div class="nrows">
                  {#each n.outs as [label, kind]}
                    <div class="nrow out"><span>{label}</span>{@render port(kind)}</div>
                  {/each}
                  {#each n.ins as [label, kind]}
                    <div class="nrow in">{@render port(kind)}<span>{label}</span></div>
                  {/each}
                  {#if !n.active}<div class="shotrow">{@render addShot()}</div>{/if}
                </div>
              </div>
            </div>
          {/each}
        </div>
        <div class="vscroll"><i></i></div>
      </div>
      <div class="hscroll"><i></i></div>
      <div class="bottomtools">
        {#each bottomIcons as group, gi}
          {#if gi > 0}<i class="bsep"></i>{/if}
          {#each group as icon}
            <svg width="20" height="22" viewBox="0 0 20 22">{@html box + icon}</svg>
          {/each}
        {/each}
        <div class="bend">
          <i class="tri left"></i><i class="tri right"></i>
          <span class="bdown"><i class="caret small"></i></span>
        </div>
      </div>
    </section>

    <section class="props">
      <div class="ptabs right">
        <div class="ptab active wide">
          <span>窗口-查找</span>
          <svg class="q" width="14" height="14" viewBox="0 0 14 14"><circle cx="7" cy="7" r="7" fill="#2a5bc0" /><text x="7" y="11" font-size="11" font-weight="700" fill="#fff" text-anchor="middle" font-family="Liberation Sans">?</text></svg>
          <svg width="14" height="14" viewBox="0 0 14 14"><rect x=".5" y=".5" width="13" height="13" rx="1" fill="#fff" stroke="#667" /><rect x="1" y="1" width="12" height="3" fill="#3a78d4" /><rect x="1" y="5" width="12" height="4" fill="#45c46a" /></svg>
        </div>
      </div>
      <div class="pbody">
        <div class="phead"><span class="pbox">−</span><b>必填参数</b></div>
        <div class="pradio">
          <label for="mode">查找-方式</label>
          <div class="radios" id="mode">
            <div class="radio checked"><i></i><span>常规-查找</span></div>
            <div class="radio"><i></i><span>当前-置顶</span></div>
          </div>
        </div>
        <div class="pfield"><span class="plabel">程序-PID</span><div class="pinput"></div></div>
        <div class="pfield"><span class="plabel">程序路径</span>
          <div class="pinput">
            <svg width="12" height="14" viewBox="0 0 12 14"><path d="M.5.500H8L11.500 4v9.500H.5z" fill="#eee" stroke="#666" /><path d="M2 5h8M2 7h8M2 9h8M2 11h8" stroke="#666" /></svg>
          </div>
        </div>
        <div class="pfield"><span class="plabel">等待超时(秒)</span><div class="pinput">5</div></div>
        <div class="phead opt"><span class="pbox">+</span><b>可选参数</b></div>
      </div>
    </section>

    <aside class="rail">
      <div class="railtext">属<br />性<br />栏</div>
      <svg class="r-arrow" width="14" height="14" viewBox="0 0 14 14"><rect width="4" height="14" fill="#777" /><path d="M6 0l8 7-8 7z" fill="#777" /></svg>
      <svg class="r-undo" width="14" height="15" viewBox="0 0 14 15"><rect width="14" height="15" rx="2" fill="#fff" /><path d="M4 3H9a3.500 3.500 0 0 1 0 8H3M5 1L2.500 3 5 5" fill="none" stroke="#f29a1f" stroke-width="1.600" /></svg>
      <svg class="r-redo" width="14" height="15" viewBox="0 0 14 15"><rect width="14" height="15" rx="2" fill="#fff" /><path d="M10 3H5a3.500 3.500 0 0 0 0 8h6M9 1l2.500 2L9 5" fill="none" stroke="#3dcf6a" stroke-width="1.600" /></svg>
      <svg class="r-right" width="14" height="14" viewBox="0 0 14 14"><rect width="14" height="14" rx="2" fill="#fff" /><path d="M2 6h6V3l4 4-4 4V8H2z" fill="#8a5ae0" /></svg>
      <svg class="r-left" width="14" height="14" viewBox="0 0 14 14"><rect width="14" height="14" rx="2" fill="#fff" /><path d="M12 6H6V3L2 7l4 4V8h6z" fill="#3a90f0" /></svg>
      <svg class="r-setup" width="15" height="15" viewBox="0 0 15 15"><rect width="15" height="15" rx="2" fill="#55606a" /><rect x="1.500" y="4" width="12" height="9.500" fill="#f4f4f4" /><circle cx="9.500" cy="9" r="3" fill="#2fbb4f" /><path d="M3 7h3M3 10h3" stroke="#555" /></svg>
      <svg class="r-cam" width="15" height="15" viewBox="0 0 15 15"><rect width="15" height="15" rx="2" fill="#2e86f0" /><rect x="3" y="4" width="6" height="7" rx="1" fill="#fff" /><path d="M9 7l3-2v5l-3-2z" fill="#fff" /></svg>
      <span class="r-up"><i class="tri up"></i></span>
      <svg class="r-log" width="15" height="15" viewBox="0 0 15 15"><rect width="12" height="15" rx="1" fill="#555" /><path d="M2 4h8M2 7h4M2 10h4" stroke="#ddd" /><circle cx="10.500" cy="10.500" r="4.500" fill="#f08a1c" /><rect x="10" y="8" width="1" height="4" fill="#fff" /></svg>
      <svg class="r-doc" width="13" height="15" viewBox="0 0 13 15"><path d="M.5.500H9L12.500 4v10.500H.5z" fill="#fff" stroke="#666" /><path d="M3 6h7M3 9h7M3 12h5" stroke="#f08a1c" stroke-width="1.500" /></svg>
    </aside>
  </main>

  <div class="logs">
    <div class="log left">
      <div class="logtab"><span>运</span><span>行</span><span>日</span><span>志</span></div>
      <div class="editor">
        <div class="gutter"><span>1</span><span>2</span><span>3</span></div>
        <div class="lines">
          <div>{dashes(38)}<em>运行日志</em>{dashes(38)}</div>
          <div>{dashes(38)}<em>初始化成功</em>{dashes(36)}</div>
        </div>
      </div>
    </div>
    <div class="log">
      <div class="logtab"><span>组</span><span>件</span><span>日</span><span>志</span></div>
      <div class="editor">
        <div class="gutter"><span>1</span><span>2</span></div>
        <div class="lines">
          <div>{dashes(38)}<em>组件日志</em>{dashes(38)}</div>
        </div>
      </div>
    </div>
  </div>

  <footer class="status">
    <span class="state">状态：未授权</span>
    <span class="msg">2023-08-10 15:24:07 打开成功！</span>
  </footer>
</div>

<style>
  :global(body) {
    margin: 0;
    background: #d0d0d0;
  }

  .window {
    width: 1282px;
    height: 810px;
    display: flex;
    flex-direction: column;
    overflow: hidden;
    box-sizing: border-box;
    border: 1px solid #888;
    border-top-color: #777;
    font-family: "Liberation Sans", "Noto Sans CJK SC", sans-serif;
    font-size: 12px;
    line-height: 1.2;
    color: #111;
  }

  i {
    display: block;
  }

  .titlebar {
    height: 30px;
    flex: none;
    display: flex;
    align-items: center;
    background: #fff;
    padding-left: 7px;
  }

  .title {
    margin-left: 6px;
    font-size: 12.200px;
  }

  .controls {
    margin-left: auto;
    display: flex;
    gap: 34px;
    padding-right: 18px;
  }

  .menubar {
    height: 24px;
    flex: none;
    display: flex;
    align-items: center;
    gap: 15.300px;
    padding-left: 8px;
    background: #0472e9;
    color: #fff;
  }

  .toolbar {
    height: 29px;
    flex: none;
    display: flex;
    align-items: center;
    padding-left: 2px;
    background: #0472e9;
    color: #fff;
    box-sizing: border-box;
  }

  .select {
    width: 100px;
    height: 20px;
    box-sizing: border-box;
    display: flex;
    align-items: center;
    padding: 0 5px 0 7px;
    border-radius: 3px;
    background: #fff;
    color: #111;
    justify-content: space-between;
  }

  .caret {
    width: 0;
    height: 0;
    border-left: 6px solid transparent;
    border-right: 6px solid transparent;
    border-top: 9px solid #999;
  }

  .caret.small {
    border-left-width: 5px;
    border-right-width: 5px;
    border-top-width: 7px;
    border-top-color: #888;
  }

  .group {
    display: flex;
    gap: 6px;
  }

  .group.first {
    margin-left: 9px;
  }

  .ti {
    width: 26px;
    height: 26px;
    flex: none;
  }

  .sep {
    width: 1px;
    height: 24px;
    margin: 0 7px;
    background: #4c9bf0;
  }

  .sep.last {
    margin-left: 4px;
  }

  .searchbox {
    width: 150px;
    height: 24px;
    box-sizing: border-box;
    display: flex;
    align-items: center;
    gap: 4px;
    padding-left: 6px;
    border-radius: 12px;
    background: #4f9bef;
    color: #a9cff8;
  }

  .searchbox span {
    padding-top: 1px;
  }

  .pkg {
    margin-left: auto;
    white-space: nowrap;
  }

  .theme {
    width: 112px;
    height: 19px;
    margin: 0 4px 0 6px;
    box-sizing: border-box;
    display: flex;
    align-items: center;
    padding: 0 4px 0 8px;
    border-radius: 3px;
    background: #fff;
    color: #111;
  }

  .swatch {
    width: 50px;
    height: 15px;
    margin-right: 6px;
    background: #0472e9;
  }

  .theme .caret {
    margin-left: auto;
  }

  .tabbar {
    height: 24px;
    flex: none;
    display: flex;
    align-items: flex-end;
    gap: 3px;
    padding-left: 1px;
    background: #0472e9;
  }

  .tab {
    width: 49px;
    height: 23px;
    box-sizing: border-box;
    display: flex;
    align-items: center;
    justify-content: center;
    padding-top: 1px;
    border: 1px solid #3f94ef;
    border-bottom: 0;
    border-radius: 3px 3px 0 0;
    color: #fff;
  }

  .tab.active {
    height: 25px;
    border-color: #fff;
    background: #f2f2f2;
    color: #111;
  }

  .ribbon {
    height: 53px;
    flex: none;
    display: flex;
    align-items: flex-start;
    padding: 6px 0 0 1px;
    box-sizing: border-box;
    background: #f2f2f2;
    position: relative;
  }

  .ritem {
    width: 58px;
    display: flex;
    flex-direction: column;
    align-items: center;
    gap: 1px;
    white-space: nowrap;
    font-size: 11.500px;
  }

  .ritem.cmd {
    margin-left: 3px;
  }

  .ritem span {
    height: 16px;
    line-height: 16px;
  }

  .rsep {
    width: 1px;
    height: 38px;
    margin: 3px 4px 0;
    background: #bbb;
  }

  .ritem:first-child + .rsep {
    margin-left: 3px;
  }

  .rscroll {
    position: absolute;
    right: 3px;
    top: 21px;
    display: flex;
    gap: 5px;
  }

  .tri {
    width: 0;
    height: 0;
    border-style: solid;
    border-color: transparent;
  }

  .tri.left {
    border-width: 5px 6px 5px 0;
    border-right-color: #999;
  }

  .tri.right {
    border-width: 5px 0 5px 6px;
    border-left-color: #888;
  }

  .tri.up {
    border-width: 0 5px 7px;
    border-bottom-color: #888;
  }

  .workspace {
    flex: none;
    height: 525px;
    display: flex;
    background: #d0d0d0;
  }

  .dock {
    width: 42px;
    flex: none;
    display: flex;
    flex-direction: column;
    align-items: center;
    box-sizing: border-box;
    padding-top: 14px;
  }

  .dock svg,
  .rail svg {
    flex: none;
    display: block;
  }

  .d-home { margin: 26px 0 0 -2px; }
  .d-smile { margin: 20px 0 0 -2px; }
  .d-fish { margin: 5px 0 0 -2px; }
  .d-pct {
    width: 30px;
    height: 22px;
    margin: 21px 0 0 -2px;
    border-radius: 3px;
    background: #1d8cf8;
    color: #fff;
    font-size: 9.500px;
    font-weight: 700;
    line-height: 22px;
    text-align: center;
    flex: none;
  }
  .d-teal { margin: 25px 0 0 -2px; }
  .d-cycle { margin: 7px 0 0 -2px; }
  .d-move { margin: 22px 0 0 -2px; }
  .d-radar { margin: 24px 0 0 -2px; }
  .d-phone { margin: 4px 0 0 -2px; }
  .d-robot { margin: 16px 0 0 -2px; }
  .d-down { margin: 25px 0 0 -2px; }

  .flowpanel {
    width: 180px;
    flex: none;
    display: flex;
    flex-direction: column;
    padding-top: 2px;
    box-sizing: border-box;
    height: 523px;
  }

  .ptabs {
    height: 22px;
    flex: none;
    display: flex;
    gap: 2px;
  }

  .ptab {
    width: 46px;
    box-sizing: border-box;
    display: flex;
    align-items: center;
    justify-content: center;
    background: #e9e9e9;
    border: 1px solid #888;
    border-bottom: 0;
    border-radius: 3px 3px 0 0;
    font-size: 12.500px;
  }

  .ptab.active {
    width: 52px;
    background: #fff;
    border-color: #fff;
  }

  .ptools {
    height: 26px;
    flex: none;
    display: flex;
    align-items: center;
    gap: 2px;
    padding-left: 4px;
    padding-right: 3px;
    background: #fff;
    box-sizing: border-box;
  }

  .psep {
    width: 1px;
    height: 14px;
    background: #2a7ae0;
  }

  .py {
    margin-left: auto;
  }

  .tree {
    flex: 1;
    position: relative;
    box-sizing: border-box;
    border: 1px solid #aaa;
    border-right-width: 2px;
    background: #f3f3f3;
  }

  .treelines {
    position: absolute;
    left: 0;
    top: 0;
  }

  .trow {
    height: 18px;
    position: relative;
    display: flex;
    align-items: center;
    font-size: 12.500px;
    white-space: nowrap;
  }

  .trow svg {
    margin-right: 3px;
    flex: none;
  }

  .lv0 { padding-left: 6px; }
  .lv1 { padding-left: 43px; }
  .lv1b { padding-left: 27px; }
  .lv2 { padding-left: 63px; }

  .lv0 .expander {
    margin-right: 6px;
    background: #f3f3f3;
  }

  .lv1b .expander {
    margin-right: 8px;
    background: #f3f3f3;
  }

  .selected {
    margin-left: 60px;
    padding-left: 3px;
    background: #66a8ff;
    color: #fff;
  }

  .expander {
    width: 9px;
    height: 9px;
    box-sizing: border-box;
    display: inline-flex;
    align-items: center;
    justify-content: center;
    flex: none;
    border: 1px solid #777;
    font-size: 9px;
    line-height: 1;
    color: #333;
  }

  .center {
    width: 782px;
    flex: none;
    margin-left: 3px;
    display: flex;
    flex-direction: column;
  }

  .doctabs {
    height: 27px;
    flex: none;
    padding: 4px 0 0 1px;
    box-sizing: border-box;
  }

  .doctab {
    width: 104px;
    height: 23px;
    box-sizing: border-box;
    display: flex;
    align-items: center;
    gap: 7px;
    padding-left: 16px;
    background: #ececec;
    border-radius: 3px 3px 0 0;
  }

  .doctab b {
    margin-left: 7px;
    font-size: 15px;
    font-weight: 700;
    color: #666;
  }

  .viewport {
    height: 462px;
    flex: none;
    display: flex;
  }

  .canvas {
    width: 769px;
    flex: none;
    position: relative;
    overflow: hidden;
    background: #d2d2d2;
    border-left: 1px solid #aaa;
    box-sizing: border-box;
  }

  .wires {
    position: absolute;
    left: 0;
    top: 0;
  }

  .vscroll {
    width: 13px;
    background: #ededed;
    padding: 9px 0 0 0;
    box-sizing: border-box;
    border-right: 2px solid #d0d0d0;
  }

  .vscroll i {
    width: 10px;
    height: 21px;
    background: #b4b4b4;
  }

  .hscroll {
    height: 9px;
    flex: none;
    background: #ededed;
    padding-left: 2px;
  }

  .hscroll i {
    width: 20px;
    height: 9px;
    background: #b4b4b4;
  }

  .bottomtools {
    height: 26px;
    flex: none;
    display: flex;
    align-items: center;
    gap: 4px;
    padding-left: 1px;
    background: #f2f2f2;
  }

  .bottomtools svg {
    flex: none;
  }

  .bsep {
    width: 1px;
    height: 18px;
    margin: 0 3px;
    background: #ccc;
  }

  .bend {
    margin-left: auto;
    display: flex;
    align-items: center;
    gap: 3px;
    padding-right: 6px;
  }

  .bdown {
    width: 16px;
    height: 17px;
    margin-left: 8px;
    display: flex;
    align-items: center;
    justify-content: center;
    background: #ddd;
    border: 1px solid #bbb;
    border-radius: 3px;
  }

  .start-node {
    position: absolute;
    left: 133px;
    top: 55px;
    width: 197px;
  }

  .node {
    position: absolute;
  }

  .ntitle {
    height: 15px;
    line-height: 15px;
    padding-left: 6px;
    font-size: 10px;
    color: #6a84c8;
    white-space: nowrap;
  }

  .nbox {
    box-sizing: border-box;
    border: 2.500px solid #777;
    border-radius: 4px;
    background: #dedede;
    height: 139px;
    position: relative;
  }

  .nbox.active {
    border-width: 3px;
    border-color: #f5a011;
  }

  .nhead {
    height: 22px;
    position: relative;
    display: flex;
    align-items: center;
  }

  .nhead.blue {
    background: #3a6fe0;
    padding-left: 10px;
  }

  .nhead.steel {
    background: #5a87a3;
    padding-left: 8px;
  }

  .nglyph {
    width: 18px;
    height: 18px;
  }

  .chip {
    margin-left: auto;
    margin-right: 9px;
    height: 17px;
  }

  .exec {
    position: absolute;
    top: 3px;
    width: 16px;
    height: 16px;
    border-radius: 50%;
    background: #eceae6;
    display: flex;
    align-items: center;
    justify-content: center;
  }

  .exec.left { left: -8px; }
  .exec.right { right: -9px; }

  .srows {
    padding-top: 1px;
    font-size: 10px;
  }

  .srow {
    height: 16px;
    display: flex;
    align-items: center;
    gap: 4px;
    padding-left: 8px;
    color: #333;
  }

  .srow.end {
    justify-content: flex-end;
    padding-right: 6px;
    gap: 2px;
  }

  .srow.end .expander {
    margin-left: 5px;
  }

  .plus {
    flex: none;
  }

  .nrows {
    padding-top: 1.500px;
    font-size: 10px;
    color: #333;
  }

  .nrow {
    height: 14px;
    position: relative;
    display: flex;
    align-items: center;
    white-space: nowrap;
  }

  .nrow.out {
    justify-content: flex-end;
    padding-right: 9px;
  }

  .nrow.in {
    padding-left: 8px;
  }

  .port {
    position: absolute;
    width: 13px;
    height: 13px;
    border-radius: 50%;
    background: #a2a2a2;
    display: flex;
    align-items: center;
    justify-content: center;
    font-size: 12px;
    line-height: 1;
    top: .5px;
  }

  .nrow.out .port { right: -8px; }
  .nrow.in .port { left: -7px; }
  .port.b { color: #c800c8; }
  .port.s { color: #0a7a1e; }
  .port.n { color: #2346c8; background: #8c9cc0; }
  .port.l { color: #d8560c; }

  .shotrow {
    display: flex;
    justify-content: center;
    padding: 5px 0 0 0;
  }

  .shot {
    display: block;
  }

  .props {
    width: 251px;
    flex: none;
    display: flex;
    flex-direction: column;
    padding-top: 1px;
    box-sizing: border-box;
    margin-left: -1px;
  }

  .ptabs.right {
    padding-left: 3px;
    height: 24px;
  }

  .ptab.wide {
    width: 114px;
    justify-content: flex-start;
    background: #f2f2f2;
    border-color: #aaa;
    font-size: 12px;
    padding-left: 14px;
  }

  .ptab.wide .q {
    margin: 0 3px 0 8px;
  }

  .pbody {
    flex: 1;
    background: #f2f2f2;
    padding: 3px 0 0 6px;
  }

  .phead {
    height: 18px;
    display: flex;
    align-items: center;
    gap: 7px;
  }

  .phead b {
    font-size: 12px;
  }

  .phead.opt {
    margin-top: 2px;
  }

  .pbox {
    width: 13px;
    height: 13px;
    box-sizing: border-box;
    border: 1px solid #222;
    border-radius: 1px;
    display: flex;
    align-items: center;
    justify-content: center;
    font-size: 13px;
    line-height: 1;
  }

  .pradio {
    display: flex;
    align-items: center;
    height: 48px;
  }

  .pradio label {
    width: 87px;
    text-align: right;
  }

  .radios {
    margin-left: 11px;
  }

  .radio {
    height: 24px;
    display: flex;
    align-items: center;
    gap: 10px;
  }

  .radio i {
    width: 13px;
    height: 13px;
    box-sizing: border-box;
    border: 1.500px solid #9ab4ec;
    border-radius: 50%;
    background: #f2f2f2;
  }

  .radio.checked i {
    border-color: #5f82d8;
    background: radial-gradient(circle, #3c62c4 3.200px, #f6f6f6 3.800px);
  }

  .pfield {
    display: flex;
    align-items: center;
    height: 24px;
  }

  .pfield:nth-of-type(3) {
    margin-top: 10px;
  }

  .plabel {
    width: 87px;
    text-align: right;
    white-space: nowrap;
  }

  .pinput {
    width: 129px;
    height: 20px;
    margin-left: 6px;
    padding: 0 10px 0 5px;
    box-sizing: border-box;
    display: flex;
    align-items: center;
    justify-content: flex-end;
    background: #fff;
    border-radius: 2px;
  }

  .pfield:nth-of-type(5) .pinput {
    justify-content: flex-start;
  }

  .rail {
    width: 22px;
    flex: none;
    display: flex;
    flex-direction: column;
    align-items: center;
    box-sizing: border-box;
    padding-top: 21px;
  }

  .railtext {
    font-size: 13px;
    line-height: 17.500px;
    text-align: center;
  }

  .r-arrow { margin-top: 4px; }
  .r-undo { margin-top: 72px; }
  .r-redo { margin-top: 1px; }
  .r-right { margin-top: 31px; }
  .r-left { margin-top: 2px; }
  .r-setup { margin-top: 58px; }
  .r-cam { margin-top: 6px; }

  .r-up {
    width: 14px;
    height: 13px;
    margin-top: 117px;
    box-sizing: border-box;
    display: flex;
    align-items: center;
    justify-content: center;
    background: #eee;
    border: 1px solid #ccc;
    border-radius: 2px;
    flex: none;
  }

  .r-log { margin-top: 6px; }
  .r-doc { margin-top: 7px; }

  .logs {
    height: 103px;
    flex: none;
    display: flex;
    gap: 4px;
    padding-top: 3px;
    box-sizing: border-box;
    border-top: 1px solid #d0d0d0;
    background: #fff;
  }

  .log {
    flex: 1;
    display: flex;
  }

  .log.left {
    flex: none;
    width: 639px;
    padding-left: 2px;
    box-sizing: border-box;
  }

  .logtab {
    width: 27px;
    height: 89px;
    flex: none;
    box-sizing: border-box;
    border: 1px solid #111;
    border-right: 0;
    background: #fff;
    display: flex;
    flex-direction: column;
    align-items: center;
    justify-content: center;
    gap: 3px;
    font-size: 12px;
    line-height: 13px;
    border-radius: 2px 0 0 2px;
  }

  .editor {
    flex: 1;
    display: flex;
    box-sizing: border-box;
    margin-left: 2px;
    border-top: 2px solid #777;
    border-left: 2px solid #777;
    background: #f0f0f0;
    height: 98px;
  }

  .gutter {
    width: 48px;
    flex: none;
    background: #e3e3e3;
    padding-right: 5px;
    box-sizing: border-box;
    display: flex;
    flex-direction: column;
    align-items: flex-end;
    font-size: 14px;
    color: #222;
  }

  .gutter span {
    height: 20px;
    line-height: 19px;
  }

  .lines {
    padding-left: 8px;
    font-family: "Liberation Mono", monospace;
    font-size: 10px;
    font-weight: 700;
    white-space: nowrap;
  }

  .lines div {
    height: 20px;
    line-height: 19px;
  }

  .lines em {
    font-style: normal;
    font-weight: 400;
    font-family: "Liberation Sans", "Noto Sans CJK SC", sans-serif;
    font-size: 13px;
  }

  .status {
    flex: 1;
    display: flex;
    align-items: center;
    background: #d0d0d0;
    padding-left: 8px;
  }

  .state {
    width: 637px;
    color: #2a20f0;
  }
</style>
